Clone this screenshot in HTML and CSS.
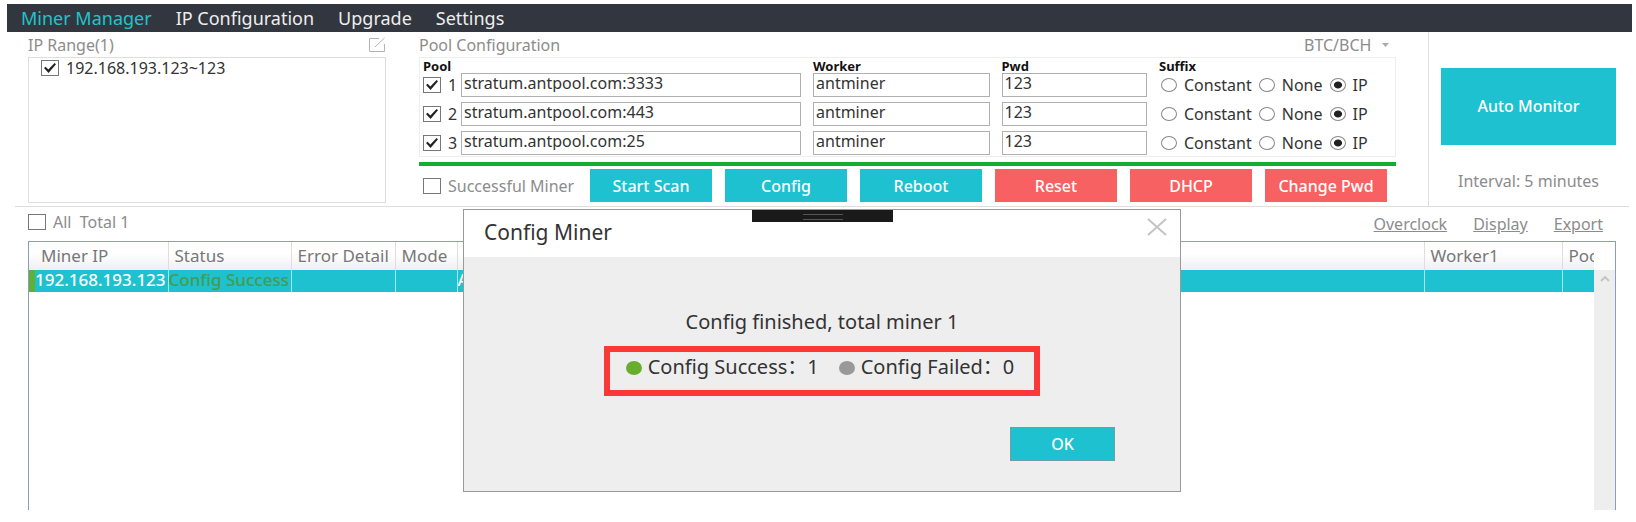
FILE: index.html
```html
<!DOCTYPE html>
<html lang="en">
<head>
  <meta charset="UTF-8" />
  <meta name="viewport" content="width=device-width, initial-scale=1.0"/>
  <title>Miner Manager</title>
  <link rel="stylesheet" href="styles.css">
</head>
<body>

  <nav class="menu">
    <a href="#" class="active">Miner Manager</a>
    <a href="#">IP Configuration</a>
    <a href="#">Upgrade</a>
    <a href="#">Settings</a>
  </nav>

  <main>
    <div class="top">
      <section class="range">
        <header class="panel-title">
          <h2>IP Range(1)</h2>
          <button class="edit" aria-label="Edit IP range">
            <svg width="18" height="16" viewBox="0 0 18 16" fill="none" stroke="#b4b4b4">
              <path d="M11 1.5H1.5V14.5H16.5V7M7 10L16.5 1"/>
            </svg>
          </button>
        </header>
        <div class="range-list">
          <label><input type="checkbox" checked> 192.168.193.123~123</label>
        </div>
      </section>

      <section class="pool">
        <header class="panel-title">
          <h2>Pool Configuration</h2>
          <select class="coin" aria-label="Coin">
            <option>BTC/BCH</option>
          </select>
          <svg class="caret" width="7" height="4" viewBox="0 0 7 4"><path d="M0 0H7L3.500 4Z" fill="#aaa"/></svg>
        </header>

        <div class="pool-box">
          <div class="pool-row pool-head">
            <span class="head-pool">Pool</span>
            <span>Worker</span>
            <span>Pwd</span>
            <span>Suffix</span>
          </div>
          <div class="pool-row">
            <label><input type="checkbox" checked> 1</label>
            <input type="text" value="stratum.antpool.com:3333" aria-label="Pool 1">
            <input type="text" value="antminer" aria-label="Worker 1">
            <input type="text" value="123" aria-label="Password 1">
            <div class="suffix">
              <label><input type="radio" name="suffix1"> Constant</label>
              <label><input type="radio" name="suffix1"> None</label>
              <label><input type="radio" name="suffix1" checked> IP</label>
            </div>
          </div>
          <div class="pool-row">
            <label><input type="checkbox" checked> 2</label>
            <input type="text" value="stratum.antpool.com:443" aria-label="Pool 2">
            <input type="text" value="antminer" aria-label="Worker 2">
            <input type="text" value="123" aria-label="Password 2">
            <div class="suffix">
              <label><input type="radio" name="suffix2"> Constant</label>
              <label><input type="radio" name="suffix2"> None</label>
              <label><input type="radio" name="suffix2" checked> IP</label>
            </div>
          </div>
          <div class="pool-row">
            <label><input type="checkbox" checked> 3</label>
            <input type="text" value="stratum.antpool.com:25" aria-label="Pool 3">
            <input type="text" value="antminer" aria-label="Worker 3">
            <input type="text" value="123" aria-label="Password 3">
            <div class="suffix">
              <label><input type="radio" name="suffix3"> Constant</label>
              <label><input type="radio" name="suffix3"> None</label>
              <label><input type="radio" name="suffix3" checked> IP</label>
            </div>
          </div>
        </div>

        <div class="progress"></div>

        <div class="actions">
          <label><input type="checkbox"> Successful Miner</label>
          <button>Start Scan</button>
          <button>Config</button>
          <button>Reboot</button>
          <button class="red">Reset</button>
          <button class="red">DHCP</button>
          <button class="red">Change Pwd</button>
        </div>
      </section>

      <section class="monitor">
        <button>Auto Monitor</button>
        <p>Interval: 5 minutes</p>
      </section>
    </div>

    <div class="toolbar">
      <label><input type="checkbox"> All&nbsp; Total 1</label>
      <div class="links">
        <a href="#">Overclock</a>
        <a href="#">Display</a>
        <a href="#">Export</a>
      </div>
    </div>

    <div class="miners">
      <table>
        <colgroup>
          <col class="c-mark"><col class="c-ip"><col class="c-status"><col class="c-error">
          <col class="c-mode"><col><col class="c-worker"><col class="c-pool">
        </colgroup>
        <thead>
          <tr>
            <th></th>
            <th>Miner IP</th>
            <th>Status</th>
            <th>Error Detail</th>
            <th>Mode</th>
            <th></th>
            <th>Worker1</th>
            <th>Pool</th>
          </tr>
        </thead>
        <tbody>
          <tr>
            <td class="mark"></td>
            <td>192.168.193.123</td>
            <td class="success">Config Success</td>
            <td></td>
            <td></td>
            <td>A</td>
            <td></td>
            <td></td>
          </tr>
        </tbody>
      </table>
      <div class="scroll">
        <svg width="10" height="6" viewBox="0 0 10 6" fill="none" stroke="#c4c4c4" stroke-width="2"><path d="M1 5L5 1L9 5"/></svg>
      </div>
    </div>

    <div class="overlay">
      <div class="dialog" role="dialog" aria-labelledby="dialog-title">
        <div class="grip"></div>
        <header>
          <h1 id="dialog-title">Config Miner</h1>
          <button class="close" aria-label="Close">
            <svg width="20" height="18" viewBox="0 0 20 18" stroke="#c4c4c4" stroke-width="2"><path d="M1 1L19 17M19 1L1 17"/></svg>
          </button>
        </header>
        <div class="dialog-body">
          <p>Config finished, total miner 1</p>
          <div class="result">
            <span class="dot green"></span>
            <span>Config Success：1</span>
            <span class="dot"></span>
            <span>Config Failed：0</span>
          </div>
          <button class="ok">OK</button>
        </div>
      </div>
    </div>
  </main>

</body>
</html>
```
FILE: styles.css
```css
:root {
  --teal: #1dc1cf;
  --red: #f76161;
  --dark: #32363f;
  --gray: #8c8c8c;
  --line: #dedede;
}

* { box-sizing: border-box; margin: 0; padding: 0; }

body {
  display: flex;
  flex-direction: column;
  min-height: 100vh;
  padding: 4px 4px 12px 7px;
  font-family: "Noto Sans", "Noto Sans CJK SC", sans-serif;
  font-size: 16px;
  line-height: 20px;
  color: #333;
  background: #fff;
}

h1, h2 { font-weight: normal; }

button, input, select {
  font: inherit;
  color: inherit;
}

button {
  background: var(--teal);
  color: white;
  border: none;
  font-weight: 500;
  cursor: pointer;
}

label {
  display: flex;
  align-items: center;
  gap: 7px;
  white-space: nowrap;
}

input[type="checkbox"] {
  appearance: none;
  flex: none;
  width: 18px;
  height: 16px;
  border: 1px solid #777;
  background: #fff;
}

input[type="checkbox"]:checked::before {
  content: "";
  display: block;
  width: 12px;
  height: 10px;
  margin: 2px;
  background: #222;
  clip-path: polygon(0 50%, 14% 38%, 36% 66%, 88% 0, 100% 12%, 38% 100%);
}

input[type="radio"] {
  appearance: none;
  flex: none;
  width: 16px;
  height: 14px;
  border: 1px solid #888;
  border-radius: 50%;
  background: #fff;
}

input[type="radio"]:checked {
  background: radial-gradient(ellipse, #222 36%, #fff 46%);
}

.menu {
  display: flex;
  gap: 24px;
  height: 28px;
  padding: 0 14px;
  background: var(--dark);
  font-size: 18px;
  line-height: 28px;
}

.menu a {
  color: #eee;
  text-decoration: none;
}

.menu a.active { color: #22c3cc; }

main {
  position: relative;
  flex: 1;
  display: flex;
  flex-direction: column;
  margin: 0 3px 0 8px;
}

/* top panels */
.top {
  display: grid;
  grid-template-columns: 391fr 1009fr 201px;
  padding-left: 13px;
  border-bottom: 1px solid var(--line);
}

.panel-title {
  display: flex;
  align-items: center;
  justify-content: space-between;
  height: 25px;
  color: var(--gray);
}

.panel-title h2 { font-size: 16px; }

.range {
  display: flex;
  flex-direction: column;
  margin-right: 33px;
  padding-bottom: 3px;
}

.edit {
  height: 16px;
  background: none;
}

.edit svg, .close svg { display: block; }

.range-list {
  flex: 1;
  padding: 0 12px;
  border: 1px solid var(--line);
}

.pool { margin-right: 32px; }

.coin {
  appearance: none;
  margin-left: auto;
  border: none;
  background: none;
}

.caret { margin: 0 7px 0 10px; }

.pool-box {
  padding: 1px 9px 0 3px;
  height: 100px;
  border: 1px solid #eee;
}

.pool-row {
  display: grid;
  grid-template-columns: 26px 339fr 176fr 145fr 227px;
  column-gap: 12px;
  height: 24px;
  margin-bottom: 5px;
}

.pool-head {
  height: 14px;
  margin-bottom: 0;
  font-size: 13px;
  font-weight: bold;
  line-height: 14px;
  color: #111;
}

.head-pool { grid-column: span 2; }

.pool-row input[type="text"] {
  min-width: 0;
  padding: 0 2px 4px;
  border: 1px solid #b0b0b0;
  line-height: 18px;
}

.suffix {
  display: flex;
  gap: 7px;
  padding-left: 2px;
}

.progress {
  height: 4px;
  margin-top: 5px;
  background: #12ae31;
}

.actions {
  display: flex;
  gap: 13px;
  margin: 3px 9px 4px 4px;
  color: var(--gray);
}

.actions label { flex: 1; }

.actions button {
  width: 122px;
  height: 33px;
}

.actions .red { background: var(--red); }

.monitor {
  display: flex;
  flex-direction: column;
  padding: 36px 13px 0 12px;
  border-left: 1px solid var(--line);
  color: var(--gray);
  text-align: center;
}

.monitor button {
  height: 77px;
  margin-bottom: 26px;
  padding-bottom: 2px;
}

/* miner list */
.toolbar {
  display: flex;
  justify-content: space-between;
  height: 34px;
  padding: 5px 26px 0 13px;
  color: var(--gray);
}

.toolbar label { height: 20px; }

.links {
  display: flex;
  gap: 26px;
  line-height: 24px;
}

.links a { color: var(--gray); }

.miners {
  flex: 1;
  display: flex;
  margin: 0 13px;
  border: 1px solid #8b9cc4;
  border-bottom: none;
}

table {
  flex: 1;
  width: 0;
  height: 50px;
  table-layout: fixed;
  border-collapse: collapse;
  font-size: 17px;
  white-space: nowrap;
}

.c-mark { width: 6px; }
.c-ip { width: 133px; }
.c-status { width: 123px; }
.c-error { width: 104px; }
.c-mode { width: 62px; }
.c-worker { width: 138px; }
.c-pool { width: 32px; }

th, td {
  overflow: hidden;
  text-align: left;
}

th {
  height: 28px;
  padding-left: 6px;
  border-right: 1px solid var(--line);
  background: linear-gradient(#fff 40%, #eeeff2);
  font-weight: normal;
  color: #777;
}

td {
  height: 22px;
  border-right: 1px solid #a5e6ec;
  background: var(--teal);
  font-weight: 500;
  line-height: 20px;
  vertical-align: top;
  color: white;
}

th:first-child, td:first-child, th:last-child, td:last-child {
  padding-left: 0;
  border-right: none;
}

th:last-child { padding-left: 6px; }

td.mark { background: #62b032; }

td.success { color: #449c50; }

.scroll {
  width: 21px;
  margin-top: 28px;
  padding-top: 6px;
  background: #eee;
  line-height: 0;
  text-align: center;
}

/* dialog */
.overlay {
  position: absolute;
  inset: 177px 0 auto;
  display: flex;
  justify-content: center;
}

.dialog {
  position: relative;
  width: 718px;
  border: 1px solid #999;
  background: #eee;
}

.grip {
  position: absolute;
  top: 0;
  left: 50%;
  width: 141px;
  height: 12px;
  margin-left: -70px;
  background: #1a1a1a;
}

.grip::before {
  content: "";
  display: block;
  width: 40px;
  height: 4px;
  margin: 4px auto;
  border: solid #555;
  border-width: 1px 0;
}

.dialog header {
  display: flex;
  justify-content: space-between;
  height: 47px;
  padding: 8px 13px 0 20px;
  background: white;
}

.dialog h1 {
  font-size: 21px;
  line-height: 28px;
}

.close {
  height: 18px;
  background: none;
}

.dialog-body {
  display: flex;
  flex-direction: column;
  align-items: center;
  padding: 53px 65px 30px;
  font-size: 20px;
  line-height: 24px;
}

.result {
  display: flex;
  align-items: center;
  height: 50px;
  margin: 12px 0 31px;
  padding: 0 20px 8px 16px;
  border: 6px solid #fb3838;
}

.dot {
  width: 16px;
  height: 14px;
  margin: 2px 6px 0 20px;
  border-radius: 50%;
  background: #999;
}

.dot.green {
  margin-left: 0;
  background: #68ae2e;
}

.ok {
  align-self: flex-end;
  width: 105px;
  height: 34px;
  border: 1px solid #6f9fa5;
  font-size: 16px;
}
```
